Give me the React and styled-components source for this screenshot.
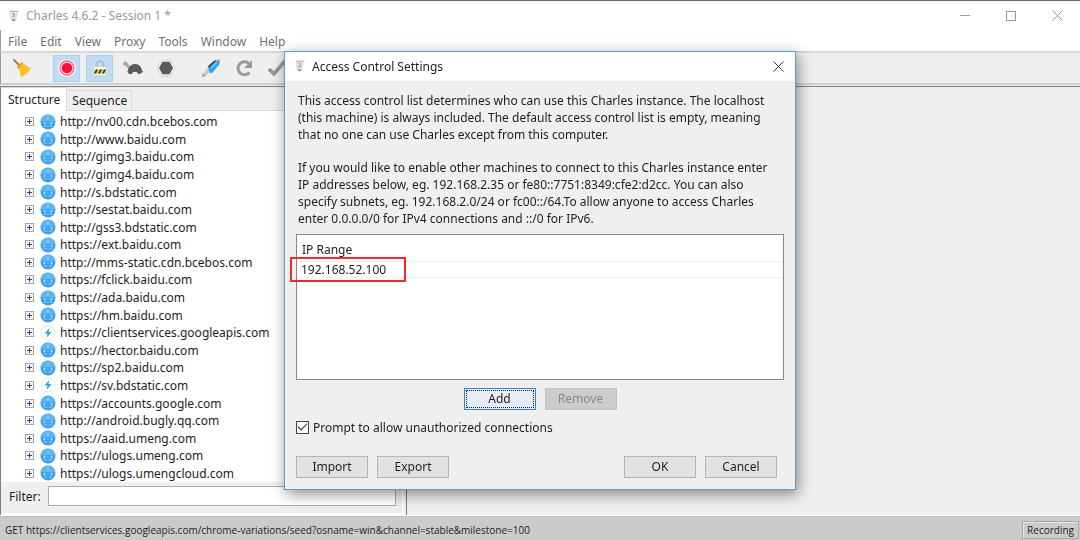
import { useState } from "react";
import styled, { createGlobalStyle } from "styled-components";

const GlobalStyle = createGlobalStyle`
  * {
    box-sizing: border-box;
  }
  body {
    margin: 0;
    font-family: "Noto Sans", "Open Sans", sans-serif;
    font-size: 12px;
    color: #1e1e1e;
    overflow: hidden;
  }
  button,
  input {
    font: inherit;
    color: inherit;
  }
`;

const Window = styled.div`
  height: 100vh;
  display: flex;
  flex-direction: column;
  background-color: #efefef;
  border-top: 1px solid #6b6a6f;
`;

const TitleBar = styled.header`
  height: 29px;
  padding-left: 8px;
  display: flex;
  align-items: center;
  background-color: #fff;
  color: #999;
`;

const Title = styled.h1`
  flex: 1;
  margin: 0;
  padding-left: 6px;
  font-size: 12px;
  font-weight: 400;
`;

const WindowButton = styled.button`
  width: 46px;
  height: 28px;
  padding: 0;
  border: none;
  background: none;
  display: grid;
  place-items: center;
`;

const MenuBar = styled.nav`
  height: 21px;
  padding: 2px 0 0 7px;
  display: flex;
  align-items: center;
  gap: 13px;
  background-color: #fff;
  border-left: 1px solid #999;
`;

const MenuItem = styled.button`
  padding: 0;
  border: none;
  background: none;
  color: #707070;
`;

const Toolbar = styled.div`
  height: 34px;
  padding-left: 7px;
  display: flex;
  align-items: center;
  gap: 6px;
  border-left: 1px solid #999;
  border-top: 2px solid #d9d9d9;
  border-bottom: 2px solid #cfcfcf;
`;

const Tool = styled.button`
  width: 27px;
  height: 27px;
  padding: 0;
  display: grid;
  place-items: center;
  border: 1px solid ${(props) => (props.$active ? "#a9d2f1" : "transparent")};
  background-color: ${(props) => (props.$active ? "#c1dcf2" : "transparent")};
  margin-left: ${(props) => (props.$group ? "12px" : "0")};
`;

const Main = styled.main`
  flex: 1;
  min-height: 0;
  display: flex;
  margin-top: 1px;
  border-top: 1px solid #808080;
`;

const SidePanel = styled.section`
  width: 404px;
  display: flex;
  flex-direction: column;
  border-left: 1px solid #808080;
  border-right: 2px solid #fafafa;
`;

const Content = styled.section`
  flex: 1;
  margin-left: 2px;
  border-left: 1px solid #808080;
`;

const TabList = styled.div`
  height: 24px;
  display: flex;
  align-items: flex-end;
  border-bottom: 1px solid #d9d9d9;
`;

const Tab = styled.button`
  height: ${(props) => (props.$active ? "24px" : "20px")};
  margin-bottom: ${(props) => (props.$active ? "-1px" : "0")};
  padding: 0 ${(props) => (props.$active ? "6px" : "4px")};
  line-height: 20px;
  border: 1px solid #d9d9d9;
  border-bottom: none;
  border-left-color: ${(props) => (props.$active ? "#fff" : "#efefef")};
  background-color: ${(props) => (props.$active ? "#fff" : "#efefef")};
`;

const Tree = styled.ul`
  flex: 1;
  min-height: 0;
  max-height: 420px;
  margin: 0;
  padding: 2px 0 0 24px;
  list-style: none;
  display: flex;
  flex-direction: column;
  background-color: #fff;
`;

const Host = styled.li`
  flex: 1;
  min-height: 0;
  display: flex;
  align-items: center;
  line-height: 17px;
`;

const Expander = styled.button`
  width: 9px;
  height: 9px;
  padding: 0;
  border: none;
  background: none;
  display: grid;
  margin-right: 6px;
`;

const HostName = styled.span`
  padding-left: 4px;
`;

const FilterRow = styled.div`
  height: 33px;
  padding: 4px 6px 7px 8px;
  display: flex;
  align-items: stretch;
  gap: 7px;
  border-bottom: 2px solid #fafafa;
`;

const FilterLabel = styled.label`
  line-height: 21px;
`;

const FilterInput = styled.input`
  flex: 1;
  min-width: 0;
  border: 1px solid #abadb3;
  background-color: #fff;
`;

const StatusBar = styled.footer`
  height: 25px;
  padding: 4px 1px 1px 5px;
  display: flex;
  align-items: center;
  justify-content: space-between;
  background-color: #cbcbcb;
  border-top: 1px solid #fff;
  box-shadow: inset 0 1px 0 #bdbdbd;
  font-family: "Open Sans", "Noto Sans", sans-serif;
  font-size: 10px;
`;

const RecordingState = styled.span`
  padding: 0 4px;
  line-height: 16px;
  border: 1px solid #aaa;
  box-shadow: inset 1px 1px 0 #e6e6e6;
`;

const Overlay = styled.div`
  position: fixed;
  inset: 0;
  display: grid;
  place-items: center;
`;

const Dialog = styled.section`
  width: 512px;
  border: 1px solid #4f9ddb;
  background-color: #efefef;
  box-shadow: 2px 4px 14px rgba(0, 0, 0, 0.45);
`;

const DialogHeader = styled.header`
  height: 29px;
  padding-left: 9px;
  display: flex;
  align-items: center;
  background-color: #fff;
`;

const DialogTitle = styled.h2`
  flex: 1;
  margin: 0;
  padding-left: 6px;
  font-size: 12px;
  font-weight: 400;
`;

const CloseButton = styled(WindowButton)`
  width: 34px;
`;

const DialogBody = styled.div`
  padding: 11px;
`;

const Paragraph = styled.p`
  margin: 0 2px 16px;
  line-height: 17px;
`;

const TableFrame = styled.div`
  height: 146px;
  margin-top: -9px;
  border: 1px solid #828790;
  background-color: #fff;
`;

const Table = styled.table`
  width: 100%;
  border-collapse: collapse;

  th,
  td {
    padding: 0 5px;
    text-align: left;
    font-weight: 400;
    border-bottom: 1px solid #f0f0f0;
  }
  th {
    height: 27px;
    padding-top: 3px;
  }
  td {
    height: 16px;
    padding: 0 4px;
    line-height: 15px;
  }
`;

const MarkedCell = styled.td`
  position: relative;

  &::after {
    content: "";
    position: absolute;
    left: -7px;
    top: -5px;
    width: 116px;
    height: 25px;
    box-sizing: border-box;
    border: 2px solid #f5292d;
  }
`;

const ButtonRow = styled.div`
  display: flex;
  gap: 9px;
  justify-content: ${(props) => props.$align || "flex-start"};
  margin-top: ${(props) => props.$top};
`;

const Spacer = styled.div`
  flex: 1;
`;

const Button = styled.button`
  width: 72px;
  height: 22px;
  padding: 0;
  line-height: 19px;
  border: 1px solid #b4b4b4;
  background-color: #e1e1e1;

  &:disabled {
    color: #8a8a8a;
    border-color: #c2c2c2;
    background-color: #cccccc;
  }
`;

const DefaultButton = styled(Button)`
  border: 1px solid #2f86d2;
  outline: 1px dotted #222;
  outline-offset: -3px;
  background-color: #e5ecf5;
`;

const FooterRow = styled(ButtonRow)`
  padding-right: 7px;
`;

const CheckLabel = styled.label`
  margin-top: 8px;
  display: flex;
  align-items: center;
  gap: 4px;
  line-height: 19px;
`;

const Checkbox = styled.input`
  appearance: none;
  width: 13px;
  height: 13px;
  margin: 0;
  border: 1px solid #444;
  background-color: #fff;
  display: grid;
  place-items: center;

  &:checked::before {
    content: "";
    width: 8px;
    height: 4px;
    margin-bottom: 3px;
    border-left: 1px solid #222;
    border-bottom: 1px solid #222;
    transform: rotate(-45deg);
  }
`;

const JugIcon = () => (
  <svg width="12" height="12" viewBox="0 0 12 12">
    <path d="M2 1h7l-1 8-1 2H4L3 9z" fill="#e4e9e7" stroke="#c3c8c5" strokeWidth=".6" />
    <path d="M2 1.4h8.5" stroke="#a5aca8" strokeWidth=".8" />
    <path d="M4 3l3 1-2 1 2 1" fill="none" stroke="#e0938d" strokeWidth="1" />
    <path d="M4 6.5l3 .5" stroke="#7cb8ad" strokeWidth="1" />
    <path d="M4 9h3v2H4z" fill="#9aa19d" />
  </svg>
);

const CloseIcon = ({ color }) => (
  <svg width="11" height="11" viewBox="0 0 11 11">
    <path d="M.5.5l10 10M10.5.5l-10 10" stroke={color} fill="none" />
  </svg>
);

const BroomIcon = () => (
  <svg width="20" height="20" viewBox="0 0 20 20">
    <path d="M2 2l5 5" stroke="#a8794c" strokeWidth="2" strokeLinecap="round" />
    <path d="M5 9l5-5c2 3 5 5 9 6-2 4-6 8-10 9-1-4-1-7-4-10z" fill="#fbc433" />
    <path d="M5 9l5-5 1 2-5 5z" fill="#e89a28" />
    <path d="M10 9l5 4M8 11l4 5M12 7l4 3" stroke="#eaa91f" strokeWidth=".8" />
  </svg>
);

const RecordIcon = () => (
  <svg width="20" height="20" viewBox="0 0 20 20">
    <circle cx="10" cy="10" r="9" fill="#fdf1f3" />
    <circle cx="10" cy="10" r="7" fill="none" stroke="#f26a82" strokeWidth="1.3" />
    <circle cx="10" cy="10" r="5.3" fill="#f3123b" />
  </svg>
);

const LockIcon = () => (
  <svg width="16" height="18" viewBox="0 0 16 18">
    <path d="M4.500 9V6a3.500 3.500 0 0 1 7 0v3" fill="none" stroke="#b4bcc3" strokeWidth="2" />
    <rect x="2" y="8" width="12" height="8" rx="1" fill="#fbf8ee" />
    <path d="M2 10.500h12v4H2z" fill="#f7cf45" />
    <path d="M2 14.500l2-4h2l-2 4zM6 14.500l2-4h2l-2 4zM10 14.500l2-4h2l-2 4z" fill="#333" />
  </svg>
);

const TurtleIcon = () => (
  <svg width="20" height="16" viewBox="0 0 20 16">
    <path d="M0 4c0-2 3-3 4-2l1 2 3 4-2 2-3-4c-2 0-3-1-3-2z" fill="#a3a7ab" />
    <path d="M5 12c0-5 3-8 7-8s7 3 7 8z" fill="#505256" />
    <path d="M4 11h16v1l-3 2h-2l-1-2h-4l-1 2H6z" fill="#5f6165" />
    <path d="M9 5l2 3h3l2-3M11 8l-2 3M14 8l2 3" stroke="#74767a" strokeWidth=".7" fill="none" />
  </svg>
);

const HexIcon = () => (
  <svg width="20" height="18" viewBox="0 0 20 18">
    <path d="M5.500 1h9L19 9l-4.500 8h-9L1 9z" fill="#f1f1f1" stroke="#d4d4d4" />
    <path d="M6.500 2.800h7L17 9l-3.500 6.200h-7L3 9z" fill="#595b5f" />
  </svg>
);

const PenIcon = () => (
  <svg width="20" height="20" viewBox="0 0 20 20">
    <path d="M1 19l1-4 3 3z" fill="#8b8f94" />
    <path d="M2 16l5-7 4 4-7 5z" fill="#c5ccd4" />
    <path d="M7 8l7-6 2 1-8 8z" fill="#474b50" />
    <path d="M8 10l7-7c2-2 5 0 3 4l-7 8c-2 1-4-3-3-5z" fill="#2ba3f3" />
    <path d="M10 10l6-6" stroke="#7fcbfb" strokeWidth="1.500" />
    <path d="M16 2l2-1 1 1-1 2z" fill="#9aa0a6" />
  </svg>
);

const RepeatIcon = () => (
  <svg width="20" height="20" viewBox="0 0 20 20">
    <path d="M15 5.500A6.500 6.500 0 1 0 15.500 14.500" fill="none" stroke="#9a9a9a" strokeWidth="3" />
    <path d="M18 2v8h-8z" fill="#9a9a9a" />
  </svg>
);

const CheckIcon = () => (
  <svg width="20" height="18" viewBox="0 0 20 18">
    <path d="M2 10l5 5L18 2" fill="none" stroke="#949494" strokeWidth="3.500" />
  </svg>
);

const PlusBox = () => (
  <svg width="9" height="9" viewBox="0 0 9 9">
    <rect x=".5" y=".5" width="8" height="8" fill="#f6f6f6" stroke="#a5a5a5" />
    <path d="M2 4.500h5M4.500 2v5" stroke="#27418f" />
  </svg>
);

const GlobeIcon = () => (
  <svg width="16" height="16" viewBox="0 0 16 16">
    <circle cx="8" cy="8" r="7.500" fill="#3f9fec" />
    <path d="M.6 7a7.500 7.500 0 0 1 14.800 0z" fill="#5cb5f4" />
    <path d="M4 9h8M4 9l4-5 4 5M4 9l1 3h6l1-3" fill="none" stroke="#8dcaf8" strokeWidth=".6" />
    <g fill="#d9effe">
      <circle cx="8" cy="4" r=".7" />
      <circle cx="4" cy="9" r=".8" />
      <circle cx="12" cy="9" r=".8" />
      <circle cx="5" cy="12" r=".6" />
      <circle cx="11" cy="12" r=".6" />
    </g>
  </svg>
);

const BoltIcon = () => (
  <svg width="16" height="16" viewBox="0 0 16 16">
    <circle cx="8" cy="8" r="7" fill="#fff" stroke="#dcdcdc" strokeWidth=".7" />
    <path d="M9.500 3L4.500 8.500h3L6.500 13l5-6h-3z" fill="#2f9cf0" />
  </svg>
);

const menuItems = ["File", "Edit", "View", "Proxy", "Tools", "Window", "Help"];

const tools = [
  { name: "Clear", icon: <BroomIcon /> },
  { name: "Record", icon: <RecordIcon />, active: true, group: true },
  { name: "SSL Proxying", icon: <LockIcon />, active: true },
  { name: "Throttle", icon: <TurtleIcon /> },
  { name: "Breakpoints", icon: <HexIcon /> },
  { name: "Compose", icon: <PenIcon />, group: true },
  { name: "Repeat", icon: <RepeatIcon /> },
  { name: "Validate", icon: <CheckIcon /> },
];

const hosts = [
  { url: "http://nv00.cdn.bcebos.com" },
  { url: "http://www.baidu.com" },
  { url: "http://gimg3.baidu.com" },
  { url: "http://gimg4.baidu.com" },
  { url: "http://s.bdstatic.com" },
  { url: "http://sestat.baidu.com" },
  { url: "http://gss3.bdstatic.com" },
  { url: "https://ext.baidu.com" },
  { url: "http://mms-static.cdn.bcebos.com" },
  { url: "https://fclick.baidu.com" },
  { url: "https://ada.baidu.com" },
  { url: "https://hm.baidu.com" },
  { url: "https://clientservices.googleapis.com", bolt: true },
  { url: "https://hector.baidu.com" },
  { url: "https://sp2.baidu.com" },
  { url: "https://sv.bdstatic.com", bolt: true },
  { url: "https://accounts.google.com" },
  { url: "http://android.bugly.qq.com" },
  { url: "https://aaid.umeng.com" },
  { url: "https://ulogs.umeng.com" },
  { url: "https://ulogs.umengcloud.com" },
];

const AccessControlDialog = () => {
  const [prompt, setPrompt] = useState(true);

  return (
    <Overlay>
      <Dialog role="dialog" aria-labelledby="dialog-title">
        <DialogHeader>
          <JugIcon />
          <DialogTitle id="dialog-title">Access Control Settings</DialogTitle>
          <CloseButton aria-label="Close dialog">
            <CloseIcon color="#333" />
          </CloseButton>
        </DialogHeader>
        <DialogBody>
          <Paragraph>
            This access control list determines who can use this Charles
            instance. The localhost
            <br />
            (this machine) is always included. The default access control list
            is empty, meaning
            <br />
            that no one can use Charles except from this computer.
          </Paragraph>
          <Paragraph>
            If you would like to enable other machines to connect to this
            Charles instance enter
            <br />
            IP addresses below, eg. 192.168.2.35 or
            fe80::7751:8349:cfe2:d2cc. You can also
            <br />
            specify subnets, eg. 192.168.2.0/24 or fc00::/64.To allow anyone to
            access Charles
            <br />
            enter 0.0.0.0/0 for IPv4 connections and ::/0 for IPv6.
          </Paragraph>
          <TableFrame>
            <Table>
              <thead>
                <tr>
                  <th>IP Range</th>
                </tr>
              </thead>
              <tbody>
                <tr>
                  <MarkedCell>192.168.52.100</MarkedCell>
                </tr>
              </tbody>
            </Table>
          </TableFrame>
          <ButtonRow $align="center" $top="8px">
            <DefaultButton>Add</DefaultButton>
            <Button disabled>Remove</Button>
          </ButtonRow>
          <CheckLabel>
            <Checkbox
              type="checkbox"
              checked={prompt}
              onChange={(e) => setPrompt(e.target.checked)}
            />
            Prompt to allow unauthorized connections
          </CheckLabel>
          <FooterRow $top="19px">
            <Button>Import</Button>
            <Button>Export</Button>
            <Spacer />
            <Button>OK</Button>
            <Button>Cancel</Button>
          </FooterRow>
        </DialogBody>
      </Dialog>
    </Overlay>
  );
};

const App = () => {
  const [filter, setFilter] = useState("");

  return (
    <>
      <GlobalStyle />
      <Window>
        <TitleBar>
          <JugIcon />
          <Title>Charles 4.6.2 - Session 1 *</Title>
          <WindowButton aria-label="Minimize">
            <svg width="10" height="10" viewBox="0 0 10 10">
              <path d="M0 4.500h10" stroke="#999" />
            </svg>
          </WindowButton>
          <WindowButton aria-label="Maximize">
            <svg width="10" height="10" viewBox="0 0 10 10">
              <rect x=".5" y=".5" width="9" height="9" fill="none" stroke="#999" />
            </svg>
          </WindowButton>
          <WindowButton aria-label="Close">
            <CloseIcon color="#999" />
          </WindowButton>
        </TitleBar>
        <MenuBar>
          {menuItems.map((item) => (
            <MenuItem key={item}>{item}</MenuItem>
          ))}
        </MenuBar>
        <Toolbar>
          {tools.map((tool) => (
            <Tool
              key={tool.name}
              aria-label={tool.name}
              $active={tool.active}
              $group={tool.group}
            >
              {tool.icon}
            </Tool>
          ))}
        </Toolbar>
        <Main>
          <SidePanel>
            <TabList>
              <Tab $active>Structure</Tab>
              <Tab>Sequence</Tab>
            </TabList>
            <Tree>
              {hosts.map((host) => (
                <Host key={host.url}>
                  <Expander aria-label={`Expand ${host.url}`}>
                    <PlusBox />
                  </Expander>
                  {host.bolt ? <BoltIcon /> : <GlobeIcon />}
                  <HostName>{host.url}</HostName>
                </Host>
              ))}
            </Tree>
            <FilterRow>
              <FilterLabel htmlFor="filter">Filter:</FilterLabel>
              <FilterInput
                id="filter"
                value={filter}
                onChange={(e) => setFilter(e.target.value)}
              />
            </FilterRow>
          </SidePanel>
          <Content />
        </Main>
        <StatusBar>
          <span>
            GET
            https://clientservices.googleapis.com/chrome-variations/seed?osname=win&amp;channel=stable&amp;milestone=100
          </span>
          <RecordingState>Recording</RecordingState>
        </StatusBar>
      </Window>
      <AccessControlDialog />
    </>
  );
};

export default App;
